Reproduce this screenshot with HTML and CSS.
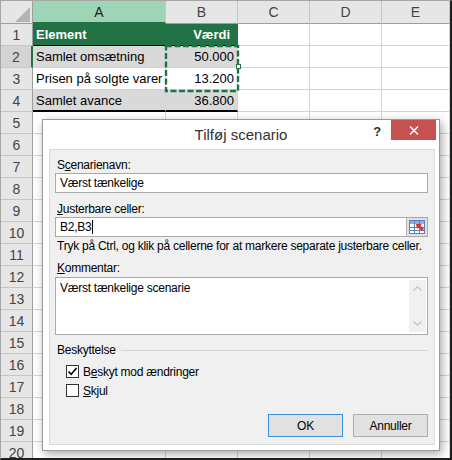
FILE: index.html
```html
<!DOCTYPE html>
<html lang="da">
<head>
    <meta charset="UTF-8">
    <meta name="viewport" content="width=device-width, initial-scale=1.0">
    <title>Tilføj scenario</title>
    <link rel="stylesheet" href="styles.css">
</head>
<body>
<div class="sheet">
    <div class="grid">
        <div class="hd corner"><span class="tri"></span></div>
        <div class="hd col active">A</div>
        <div class="hd col">B</div>
        <div class="hd col">C</div>
        <div class="hd col">D</div>
        <div class="hd col">E</div>

        <div class="hd rowno">1</div>
        <div class="cell th">Element</div>
        <div class="cell th num wide">Værdi</div>
        <div class="cell"></div><div class="cell"></div><div class="cell"></div>

        <div class="hd rowno active">2</div>
        <div class="cell shade">Samlet omsætning</div>
        <div class="cell shade num">50.000</div>
        <div class="cell"></div><div class="cell"></div><div class="cell"></div>

        <div class="hd rowno">3</div>
        <div class="cell">Prisen på solgte varer</div>
        <div class="cell num">13.200</div>
        <div class="cell"></div><div class="cell"></div><div class="cell"></div>

        <div class="hd rowno">4</div>
        <div class="cell shade total">Samlet avance</div>
        <div class="cell shade num total">36.800</div>
        <div class="cell"></div><div class="cell"></div><div class="cell"></div>

        <div class="hd rowno">5</div><div class="cell"></div><div class="cell"></div><div class="cell"></div><div class="cell"></div><div class="cell"></div>
        <div class="hd rowno">6</div><div class="cell"></div><div class="cell"></div><div class="cell"></div><div class="cell"></div><div class="cell"></div>
        <div class="hd rowno">7</div><div class="cell"></div><div class="cell"></div><div class="cell"></div><div class="cell"></div><div class="cell"></div>
        <div class="hd rowno">8</div><div class="cell"></div><div class="cell"></div><div class="cell"></div><div class="cell"></div><div class="cell"></div>
        <div class="hd rowno">9</div><div class="cell"></div><div class="cell"></div><div class="cell"></div><div class="cell"></div><div class="cell"></div>
        <div class="hd rowno">10</div><div class="cell"></div><div class="cell"></div><div class="cell"></div><div class="cell"></div><div class="cell"></div>
        <div class="hd rowno">11</div><div class="cell"></div><div class="cell"></div><div class="cell"></div><div class="cell"></div><div class="cell"></div>
        <div class="hd rowno">12</div><div class="cell"></div><div class="cell"></div><div class="cell"></div><div class="cell"></div><div class="cell"></div>
        <div class="hd rowno">13</div><div class="cell"></div><div class="cell"></div><div class="cell"></div><div class="cell"></div><div class="cell"></div>
        <div class="hd rowno">14</div><div class="cell"></div><div class="cell"></div><div class="cell"></div><div class="cell"></div><div class="cell"></div>
        <div class="hd rowno">15</div><div class="cell"></div><div class="cell"></div><div class="cell"></div><div class="cell"></div><div class="cell"></div>
        <div class="hd rowno">16</div><div class="cell"></div><div class="cell"></div><div class="cell"></div><div class="cell"></div><div class="cell"></div>
        <div class="hd rowno">17</div><div class="cell"></div><div class="cell"></div><div class="cell"></div><div class="cell"></div><div class="cell"></div>
        <div class="hd rowno">18</div><div class="cell"></div><div class="cell"></div><div class="cell"></div><div class="cell"></div><div class="cell"></div>
        <div class="hd rowno">19</div><div class="cell"></div><div class="cell"></div><div class="cell"></div><div class="cell"></div><div class="cell"></div>
        <div class="hd rowno">20</div><div class="cell"></div><div class="cell"></div><div class="cell"></div><div class="cell"></div><div class="cell"></div>
    </div>

    <!-- copy marquee round B2:B3 -->
    <svg class="ants" width="80" height="52" viewBox="0 0 80 52">
        <rect x="4" y="3" width="72" height="45" fill="none" stroke="#217346" stroke-width="2.4" stroke-dasharray="6 2.5"/>
        <rect x="74.5" y="21.5" width="4" height="4" fill="#fff" stroke="#217346" stroke-width="1"/>
    </svg>

    <div class="dialog">
        <div class="titlebar">
            <div class="title">Tilføj scenario</div>
            <div class="controls">
                <span class="help">?</span>
                <span class="close">
                    <svg width="10" height="9" viewBox="0 0 10 9"><path d="M1 0.5L9 8.5M9 0.5L1 8.5" stroke="#fff" stroke-width="1.5"/></svg>
                </span>
            </div>
        </div>

        <div class="panel">
            <div class="label">S<u>c</u>enarienavn:</div>
            <div class="field"><span class="val">Værst tænkelige</span></div>

            <div class="label spaced"><u>J</u>usterbare celler:</div>
            <div class="field">
                <span class="val">B2,B3<i class="caret"></i></span>
                <span class="refbtn">
                    <svg width="16" height="14" viewBox="0 0 16 14">
                        <rect x="0.5" y="0.5" width="15" height="13" fill="#fff" stroke="#5b7fbf"/>
                        <rect x="1" y="1" width="14" height="3" fill="#8fb0e0"/>
                        <path d="M1 7.5H15M1 10.5H15M5.5 1V13M10.5 1V13" stroke="#5b7fbf" stroke-width="1"/>
                        <path d="M7 4L13 4L11.5 5.5L15 9L13 11L9.5 7.5L8 9Z" fill="#e0312a"/>
                    </svg>
                </span>
            </div>

            <div class="hint">Tryk på Ctrl, og klik på cellerne for at markere separate justerbare celler.</div>

            <div class="label"><u>K</u>ommentar:</div>
            <div class="field memo">
                <span class="val">Værst tænkelige scenarie</span>
                <span class="scroll">
                    <svg width="9" height="5" viewBox="0 0 9 5"><path d="M0.5 4.5L4.5 0.8L8.5 4.5" fill="none" stroke="#c2c2c2" stroke-width="1.2"/></svg>
                    <svg width="9" height="5" viewBox="0 0 9 5"><path d="M0.5 0.5L4.5 4.2L8.5 0.5" fill="none" stroke="#c2c2c2" stroke-width="1.2"/></svg>
                </span>
            </div>

            <div class="group">Beskyttelse</div>
            <div class="check">
                <span class="box">
                    <svg width="11" height="11" viewBox="0 0 11 11"><path d="M1.5 5.5L4.2 8.3L9.5 2" fill="none" stroke="#000" stroke-width="1.6"/></svg>
                </span>
                B<u>e</u>skyt mod ændringer
            </div>
            <div class="check">
                <span class="box"></span>
                <u>S</u>kjul
            </div>

            <div class="buttons">
                <span class="btn default">OK</span>
                <span class="btn">Annuller</span>
            </div>
        </div>
    </div>
</div>
</body>
</html>
```

FILE: styles.css
```css
* {
    box-sizing: border-box;
}

body {
    margin: 0;
    font-family: 'Liberation Sans', Arial, sans-serif;
    background-color: #fff;
}

.sheet {
    position: relative;
    width: 452px;
    height: 460px;
    overflow: hidden;
    background-color: #fff;
    border-top: 1px solid #a6a6a6;
    border-left: 1px solid #a6a6a6;
    border-right: 2px solid #1e1e1e;
    border-bottom: 2px solid #1e1e1e;
}

/* worksheet */
.grid {
    display: grid;
    grid-template-columns: 32px 133px 72px 72px 72px 1fr;
    grid-template-rows: 23px;
    grid-auto-rows: 22px;
}

.hd {
    background-color: #e6e6e6;
    color: #444;
    font-size: 14px;
    display: flex;
    align-items: center;
    justify-content: center;
    border-right: 1px solid #c6c6c6;
    border-bottom: 1px solid #c6c6c6;
}

.hd.col {
    border-bottom-color: #9e9e9e;
}

.hd.col.active {
    background-color: #9fd5b7;
    color: #222;
    border-bottom: 2px solid #217346;
}

.hd.rowno {
    border-right-color: #9e9e9e;
}

.hd.rowno.active {
    background-color: #d4d4d4;
    border-right: 2px solid #217346;
}

.hd.corner {
    align-items: flex-end;
    justify-content: flex-end;
    padding: 0 2px 1px 0;
    border-bottom-color: #9e9e9e;
    border-right-color: #9e9e9e;
}

.tri {
    width: 0;
    height: 0;
    border-left: 15px solid transparent;
    border-bottom: 15px solid #b4b4b4;
}

.cell {
    font-size: 13px;
    color: #000;
    padding: 0 3px;
    display: flex;
    align-items: center;
    white-space: nowrap;
    overflow: hidden;
    border-right: 1px solid #d4d4d4;
    border-bottom: 1px solid #d4d4d4;
}

.cell.num {
    justify-content: flex-end;
}

.cell.th {
    background-color: #217346;
    color: #fff;
    font-weight: bold;
    border-right-color: #217346;
    border-bottom: 1px solid #000;
}

.cell.th.wide {
    padding-right: 7px;
}

.cell.shade {
    background-color: #d9d9d9;
}

.cell.total {
    border-bottom: 2px solid #000;
}

.ants {
    position: absolute;
    left: 161px;
    top: 42px;
}

/* dialog */
.dialog {
    position: absolute;
    left: 41px;
    top: 118px;
    width: 398px;
    height: 332px;
    background-color: #fff;
    border: 1px solid #9a9a9a;
    box-shadow: 2px 3px 9px rgba(0, 0, 0, 0.35);
    display: flex;
    flex-direction: column;
    font-size: 12px;
    letter-spacing: -0.25px;
    color: #000;
}

.titlebar {
    height: 29px;
    display: grid;
    grid-template-columns: 1fr auto 1fr;
    align-items: start;
}

.title {
    grid-column: 2;
    font-size: 15px;
    letter-spacing: 0;
    line-height: 18px;
    padding-top: 6px;
    color: #333;
}

.controls {
    grid-column: 3;
    justify-self: end;
    display: flex;
    align-items: flex-start;
    margin-right: 3px;
}

.help {
    font-size: 13px;
    font-weight: bold;
    color: #333;
    line-height: 14px;
    padding-top: 5px;
    margin-right: 10px;
}

.close {
    width: 45px;
    height: 20px;
    background-color: #c75050;
    display: flex;
    align-items: center;
    justify-content: center;
}

.panel {
    flex: 1;
    margin: 0 4px 5px 6px;
    padding: 7px 6px 7px 5px;
    background-color: #f0f0f0;
    border: 1px solid #dadada;
    display: flex;
    flex-direction: column;
}

.label {
    line-height: 16px;
    padding-left: 2px;
}

.label.spaced {
    margin-top: 8px;
}

.field {
    display: flex;
    height: 20px;
    background-color: #fff;
    border: 1px solid #a9a9a9;
}

.field .val {
    flex: 1;
    padding: 0 4px;
    line-height: 18px;
    white-space: nowrap;
}

.caret {
    display: inline-block;
    width: 1px;
    height: 14px;
    margin-left: 1px;
    vertical-align: -3px;
    background-color: #000;
}

.refbtn {
    width: 21px;
    margin: 0;
    background-color: #e1e1e1;
    border-left: 1px solid #b5b5b5;
    display: flex;
    align-items: center;
    justify-content: center;
}

.hint {
    line-height: 16px;
    margin-top: 1px;
    padding-left: 2px;
}

.hint + .label {
    margin-top: 6px;
}

.field.memo {
    height: 58px;
    margin-top: 1px;
}

.field.memo .val {
    padding-top: 1px;
}

.scroll {
    width: 17px;
    margin: 2px 1px 2px 0;
    background-color: #f0f0f0;
    display: flex;
    flex-direction: column;
    align-items: center;
    justify-content: space-between;
    padding: 6px 0;
}

.group {
    display: flex;
    align-items: center;
    line-height: 16px;
    margin-top: 7px;
    padding-left: 2px;
}

.group::after {
    content: '';
    flex: 1;
    height: 1px;
    margin-left: 5px;
    background-color: #d5d5d5;
}

.check {
    display: flex;
    align-items: center;
    height: 19px;
    padding-left: 11px;
}

.group + .check {
    margin-top: 4px;
}

.box {
    width: 13px;
    height: 13px;
    margin-right: 4px;
    background-color: #fff;
    border: 1px solid #333;
    display: flex;
    align-items: center;
    justify-content: center;
}

.buttons {
    margin-top: auto;
    display: flex;
    justify-content: flex-end;
    gap: 10px;
}

.btn {
    width: 75px;
    height: 23px;
    background-color: #e1e1e1;
    border: 1px solid #adadad;
    display: flex;
    align-items: center;
    justify-content: center;
}

.btn.default {
    border-color: #3c8fdb;
}
```
